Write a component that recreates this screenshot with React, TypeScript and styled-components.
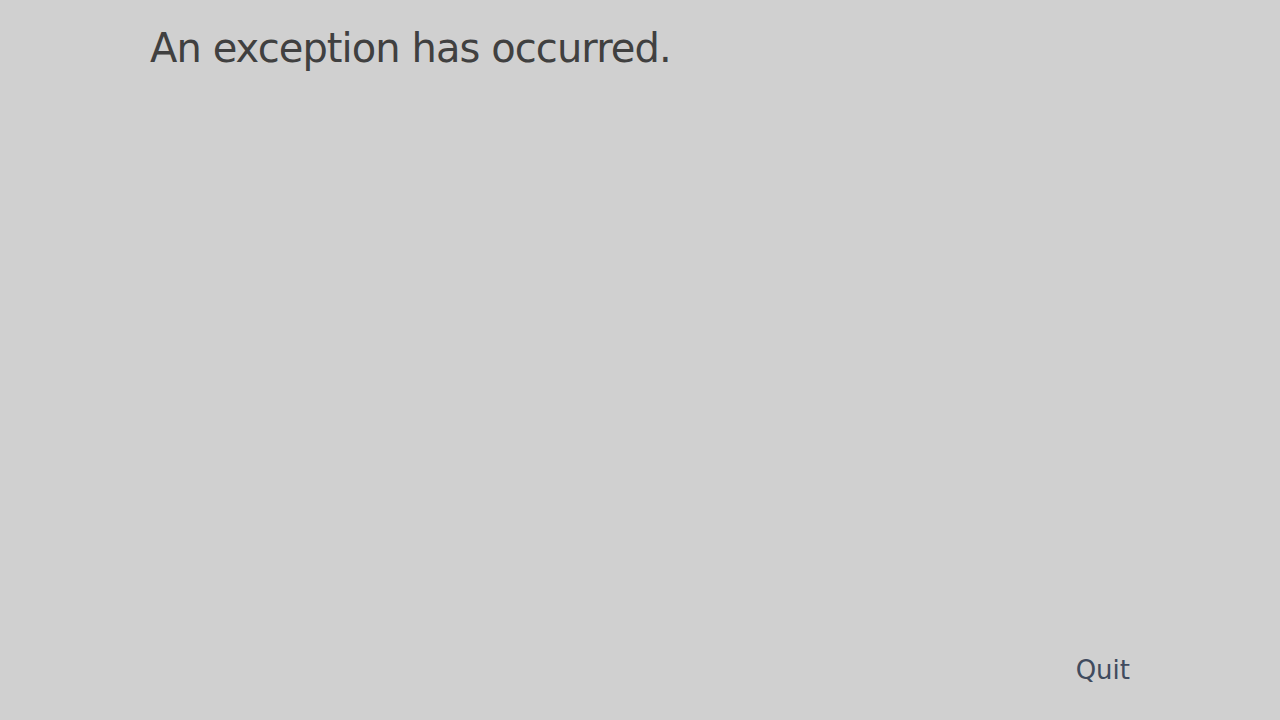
import React from "react";
import styled, { createGlobalStyle } from "styled-components";

const Global = createGlobalStyle`
  html, body { margin: 0; padding: 0; background: #d0d0d0; }
  body { font-family: "DejaVu Sans", sans-serif; }
`;

const Screen = styled.div`
  width: 1280px;
  height: 720px;
  box-sizing: border-box;
  padding: 21px 150px 34px 150px;
  display: flex;
  flex-direction: column;
  justify-content: space-between;
  background: #d0d0d0;
`;

const Title = styled.h1`
  margin: 0;
  font-family: "DejaVu Sans", sans-serif;
  font-weight: normal;
  font-size: 40px;
  line-height: 54px;
  letter-spacing: -0.93px;
  color: #404040;
`;

const Footer = styled.div`
  display: flex;
  justify-content: flex-end;
`;

const QuitButton = styled.button`
  border: none;
  background: none;
  padding: 0;
  font-family: "DejaVu Sans", sans-serif;
  font-size: 26px;
  line-height: 32px;
  color: #404b5e;
  cursor: pointer;
`;

export default function App() {
  return (
    <>
      <Global />
      <Screen>
        <Title>An exception has occurred.</Title>
        <Footer>
          <QuitButton>Quit</QuitButton>
        </Footer>
      </Screen>
    </>
  );
}
